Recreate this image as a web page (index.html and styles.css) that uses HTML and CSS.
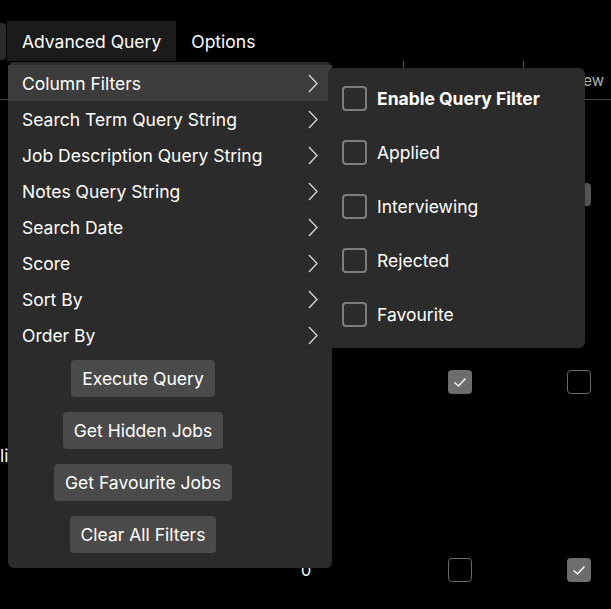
FILE: index.html
```html
<!DOCTYPE html>
<html lang="en">
<head>
<meta charset="utf-8">
<title>Advanced Query</title>
<link rel="stylesheet" href="styles.css">
</head>
<body>
<div class="app">
  <nav class="menubar">
    <div class="tab-stub"></div>
    <div class="tab active">Advanced Query</div>
    <div class="tab">Options</div>
  </nav>

  <div class="grid">
    <div class="th"></div>
    <div class="th"></div>
    <div class="th sep"></div>
    <div class="th sep label">Interview</div>

    <div class="td"></div>
    <div class="td"></div>
    <div class="td"></div>
    <div class="td"><span class="stub-btn"></span></div>

    <div class="td text-bottom">li</div>
    <div class="td"></div>
    <div class="td"><span class="cb checked"><svg viewBox="0 0 24 24" width="24" height="24"><polyline points="6.5,12.5 10.5,16 17.5,8.5" fill="none" stroke="#f2f2f2" stroke-width="1.6"/></svg></span></div>
    <div class="td"><span class="cb"></span></div>

    <div class="td num">0</div>
    <div class="td"></div>
    <div class="td"><span class="cb"></span></div>
    <div class="td"><span class="cb checked"><svg viewBox="0 0 24 24" width="24" height="24"><polyline points="6.5,12.5 10.5,16 17.5,8.5" fill="none" stroke="#f2f2f2" stroke-width="1.6"/></svg></span></div>
  </div>

  <div class="menu main-menu">
    <div class="items">
      <div class="item hover"><span>Column Filters</span><svg class="chev" viewBox="0 0 10 19" width="10" height="19"><polyline points="1,1 9,9.5 1,18"/></svg></div>
      <div class="item"><span>Search Term Query String</span><svg class="chev" viewBox="0 0 10 19" width="10" height="19"><polyline points="1,1 9,9.5 1,18"/></svg></div>
      <div class="item"><span>Job Description Query String</span><svg class="chev" viewBox="0 0 10 19" width="10" height="19"><polyline points="1,1 9,9.5 1,18"/></svg></div>
      <div class="item"><span>Notes Query String</span><svg class="chev" viewBox="0 0 10 19" width="10" height="19"><polyline points="1,1 9,9.5 1,18"/></svg></div>
      <div class="item"><span>Search Date</span><svg class="chev" viewBox="0 0 10 19" width="10" height="19"><polyline points="1,1 9,9.5 1,18"/></svg></div>
      <div class="item"><span>Score</span><svg class="chev" viewBox="0 0 10 19" width="10" height="19"><polyline points="1,1 9,9.5 1,18"/></svg></div>
      <div class="item"><span>Sort By</span><svg class="chev" viewBox="0 0 10 19" width="10" height="19"><polyline points="1,1 9,9.5 1,18"/></svg></div>
      <div class="item"><span>Order By</span><svg class="chev" viewBox="0 0 10 19" width="10" height="19"><polyline points="1,1 9,9.5 1,18"/></svg></div>
    </div>
    <div class="actions">
      <button class="btn">Execute Query</button>
      <button class="btn">Get Hidden Jobs</button>
      <button class="btn">Get Favourite Jobs</button>
      <button class="btn">Clear All Filters</button>
    </div>
  </div>

  <div class="menu sub-menu">
    <label class="check-row"><span class="box"></span><span class="bold">Enable Query Filter</span></label>
    <label class="check-row"><span class="box"></span><span>Applied</span></label>
    <label class="check-row"><span class="box"></span><span>Interviewing</span></label>
    <label class="check-row"><span class="box"></span><span>Rejected</span></label>
    <label class="check-row"><span class="box"></span><span>Favourite</span></label>
  </div>
</div>
</body>
</html>
```

FILE: styles.css
```css
* { box-sizing: border-box; }

html, body {
  margin: 0;
  padding: 0;
  background: #000;
}

body {
  font-family: Inter, "Noto Sans", sans-serif;
  color: #fff;
  width: 611px;
  height: 609px;
  overflow: hidden;
}

.app {
  position: relative;
  width: 611px;
  height: 609px;
  overflow: hidden;
}

/* ---------- menubar ---------- */
.menubar {
  display: flex;
  align-items: center;
  margin-top: 21px;
  height: 40px;
}

.tab-stub {
  width: 6px;
  height: 37px;
  background: #2b2b2b;
  border-radius: 0 4px 4px 0;
  margin-right: 1px;
}

.tab {
  height: 40px;
  display: flex;
  align-items: center;
  padding: 0 15px;
  font-size: 17.5px;
  color: #fff;
}

.tab.active {
  background: #1b1b1b;
}

/* ---------- background table ---------- */
.grid {
  display: grid;
  grid-template-columns: 320px 83px 120px 120px;
  grid-template-rows: 39px 188px 188px 188px;
  width: 643px;
}

.th {
  border-bottom: 1px solid #444;
}

.th.sep {
  border-left: 1px solid #555;
}

.th.label {
  display: flex;
  align-items: center;
  padding-left: 15px;
  font-size: 15px;
  color: #b4b4b4;
}

.td {
  display: flex;
  align-items: center;
}

.td.num {
  justify-content: flex-end;
  padding-right: 9px;
  font-size: 16px;
}

.td.text-bottom {
  align-items: flex-end;
  padding-bottom: 10px;
  font-size: 17.5px;
}

.grid .td:nth-child(4n+3) .cb { margin-left: 45px; }
.grid .td:nth-child(4n) .cb { margin-left: 44px; }

.stub-btn {
  display: block;
  width: 44px;
  height: 23px;
  margin-left: 24px;
  background: #555;
  border-radius: 4px;
}

.cb {
  display: block;
  width: 24px;
  height: 24px;
  border: 1.5px solid #6a6a6a;
  border-radius: 4px;
}

.cb.checked {
  border: none;
  background: #6d6d6d;
}

.cb svg { display: block; }

/* ---------- menus ---------- */
.menu {
  position: absolute;
  background: #2b2b2b;
  border-radius: 6px;
}

.main-menu {
  left: 8px;
  top: 62px;
  width: 324px;
  padding: 3px 0 15px;
}

.items {
  display: flex;
  flex-direction: column;
}

.item {
  height: 36px;
  display: flex;
  align-items: center;
  justify-content: space-between;
  padding: 0 14px;
  font-size: 17.5px;
  color: #fff;
}

.item.hover {
  background: #3c3c3c;
}

.chev polyline {
  fill: none;
  stroke: #d2d2d2;
  stroke-width: 1.4;
}

.actions {
  display: flex;
  flex-direction: column;
  align-items: center;
  gap: 15px;
  padding-top: 7px;
  padding-right: 54px;
}

.btn {
  height: 37px;
  padding: 0 11px;
  background: #4a4a4a;
  color: #fff;
  border: none;
  border-radius: 4px;
  font-family: inherit;
  font-size: 17.5px;
}

.sub-menu {
  left: 328px;
  top: 68px;
  width: 257px;
  padding: 3px 0 7px;
}

.check-row {
  height: 54px;
  display: flex;
  align-items: center;
  padding-left: 14px;
  font-size: 17.5px;
  color: #fff;
}

.check-row .box {
  width: 25px;
  height: 25px;
  border: 2px solid #7d7d7d;
  border-radius: 4px;
  margin-right: 10px;
  flex: none;
}

.bold { font-weight: 700; }
```
